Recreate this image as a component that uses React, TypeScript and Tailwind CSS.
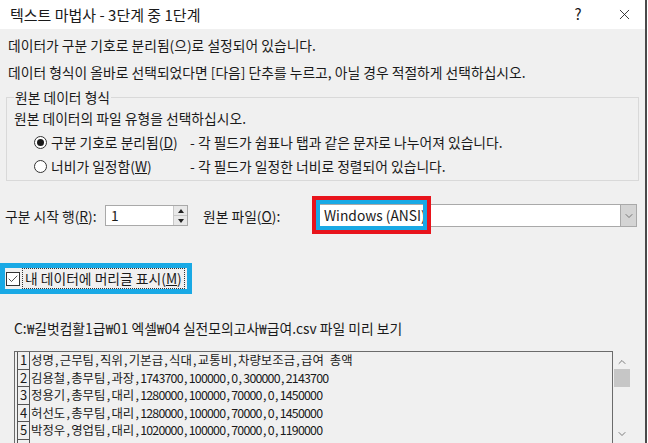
import { X, ChevronDown, ChevronUp, Check } from 'lucide-react';

const rows = [
  '성명,근무팀,직위,기본급,식대,교통비,차량보조금,급여 총액',
  '김용철,총무팀,과장,1743700,100000,0,300000,2143700',
  '정용기,총무팀,대리,1280000,100000,70000,0,1450000',
  '허선도,총무팀,대리,1280000,100000,70000,0,1450000',
  '박정우,영업팀,대리,1020000,100000,70000,0,1190000',
  '',
];

// mimic the half-width cells of the old bitmap font: commas/spaces take 6px, digits are squeezed
function PreviewText({ text }: { text: string }) {
  const parts = text.split(/(\d+|,| )/).filter(Boolean);
  return (
    <>
      {parts.map((p, i) => {
        if (p === ',') return <span key={i} className="inline-block w-[6px] text-center">,</span>;
        if (p === ' ') return <span key={i} className="inline-block w-[6px]" />;
        if (/^\d+$/.test(p)) return <span key={i} className="tracking-[-0.8px]">{p}</span>;
        return <span key={i}>{p}</span>;
      })}
    </>
  );
}

function Radio({ checked }: { checked?: boolean }) {
  return (
    <span className="w-[13px] h-[13px] rounded-full border border-[#333] bg-white flex items-center justify-center shrink-0">
      {checked && <span className="w-[7px] h-[7px] rounded-full bg-[#1a1a1a]" />}
    </span>
  );
}

export default function App() {
  return (
    <div className="w-[648px] h-[443px] bg-white overflow-hidden font-['Noto_Sans_CJK_KR',sans-serif] text-[13.8px] text-[#1a1a1a]">
      <div className="w-[647px] h-full border-r-2 border-[#4a4a4a] bg-[#f0f0f0] flex flex-col">
        {/* title bar */}
        <div className="h-[29px] bg-white flex items-center pl-[10px] shrink-0">
          <span className="text-[15px] leading-[18px]">텍스트 마법사 - 3단계 중 1단계</span>
          <span className="ml-auto w-[20px] text-center text-[15px]">?</span>
          <span className="ml-[28px] mr-[12px] flex items-center">
            <X size={17} strokeWidth={1.2} />
          </span>
        </div>

        <div className="pl-[8px] mt-[7px] h-[18px] leading-[18px]">데이터가 구분 기호로 분리됨(으)로 설정되어 있습니다.</div>
        <div className="pl-[8px] mt-[9px] h-[18px] leading-[18px]">
          데이터 형식이 올바로 선택되었다면 [다음] 단추를 누르고, 아닐 경우 적절하게 선택하십시오.
        </div>

        <fieldset className="mx-[6px] mt-[7px] border border-[#d9d9d9] pl-[7px] pb-[5px] w-[633px]">
          <legend className="px-[1px] h-[18px] leading-[18px]">원본 데이터 형식</legend>
          <div className="mt-[3px] h-[18px] leading-[18px]">원본 데이터의 파일 유형을 선택하십시오.</div>
          <div className="mt-[6px] h-[18px] flex items-center">
            <span className="ml-[20px]"><Radio checked /></span>
            <span className="ml-[4px] w-[139px] leading-[18px]">
              구분 기호로 분리됨(<span className="underline">D</span>)
            </span>
            <span className="leading-[18px]">- 각 필드가 쉼표나 탭과 같은 문자로 나누어져 있습니다.</span>
          </div>
          <div className="mt-[6px] h-[18px] flex items-center">
            <span className="ml-[20px]"><Radio /></span>
            <span className="ml-[4px] w-[139px] leading-[18px]">
              너비가 일정함(<span className="underline">W</span>)
            </span>
            <span className="leading-[18px]">- 각 필드가 일정한 너비로 정렬되어 있습니다.</span>
          </div>
        </fieldset>

        {/* start row + origin */}
        <div className="mt-[23px] h-[23px] flex items-center pl-[5px]">
          <span className="w-[100px] leading-[18px]">
            구분 시작 행(<span className="underline">R</span>):
          </span>
          <div className="w-[83px] h-[21px] bg-white border border-[#a9a9a9] flex">
            <span className="flex-1 pl-[5px] leading-[19px]">1</span>
            <div className="w-[14px] flex flex-col border-l border-[#c8c8c8]">
              <div className="flex-1 bg-[#e8e8e8] border-b border-[#c8c8c8] flex items-center justify-center">
                <span className="w-0 h-0 border-x-[3px] border-x-transparent border-b-[4px] border-b-[#222]" />
              </div>
              <div className="flex-1 bg-[#e8e8e8] flex items-center justify-center">
                <span className="w-0 h-0 border-x-[3px] border-x-transparent border-t-[4px] border-t-[#222]" />
              </div>
            </div>
          </div>
          <span className="ml-[15px] w-[115px] leading-[18px]">
            원본 파일(<span className="underline">O</span>):
          </span>
          <div className="relative w-[319px] h-[23px] bg-white border border-[#a9a9a9] flex">
            <span className="flex-1 pl-[5px] leading-[21px]">Windows (ANSI)</span>
            <div className="w-[16px] bg-[#d4d4d4] border-l border-[#a9a9a9] flex items-center justify-center">
              <ChevronDown size={12} strokeWidth={1.5} className="text-[#555]" />
            </div>
            <div className="absolute left-[-7px] top-[-9px] w-[119px] h-[38px] border-4 border-[#e8141c]">
              <div className="w-full h-full border-4 border-[#19a9e5]" />
            </div>
          </div>
        </div>

        {/* header checkbox */}
        <div className="mt-[36px] w-[192px] h-[31px] border-[5px] border-[#19a9e5] flex items-center">
          <span className="ml-[1px] w-[14px] h-[14px] border border-[#333] bg-white flex items-center justify-center">
            <Check size={12} strokeWidth={1.6} className="text-[#222]" />
          </span>
          <span className="ml-[2px] h-[21px] px-[2px] border border-dotted border-[#333] leading-[19px]">
            내 데이터에 머리글 표시(<span className="underline">M</span>)
          </span>
        </div>

        <div className="pl-[14px] mt-[25px] h-[18px] leading-[18px]">
          C:₩길벗컴활1급₩01 엑셀₩04 실전모의고사₩급여.csv 파일 미리 보기
        </div>

        {/* preview */}
        <div className="mt-[14px] pl-[14px] flex">
          <div className="w-[599px] h-[110px] border border-[#6b6b6b] pl-[2px]">
            {rows.map((r, i) => (
              <div key={i} className="h-[17.5px] flex items-stretch">
                <span className="w-[13px] border-x border-b border-[#555] text-[13px] leading-[16px] text-center">
                  {r ? i + 1 : ''}
                </span>
                <span className="pl-[1px] text-[12.4px] leading-[17px] whitespace-nowrap">
                  <PreviewText text={r} />
                </span>
              </div>
            ))}
          </div>
          <div className="w-[17px] flex flex-col items-center">
            <ChevronUp size={12} strokeWidth={1.5} className="mt-[5px] text-[#555]" />
            <div className="mt-[1px] w-[16px] h-[18px] bg-[#c6c6c6]" />
            <ChevronDown size={12} strokeWidth={1.5} className="mt-[41px] text-[#555]" />
          </div>
        </div>
      </div>
    </div>
  );
}
